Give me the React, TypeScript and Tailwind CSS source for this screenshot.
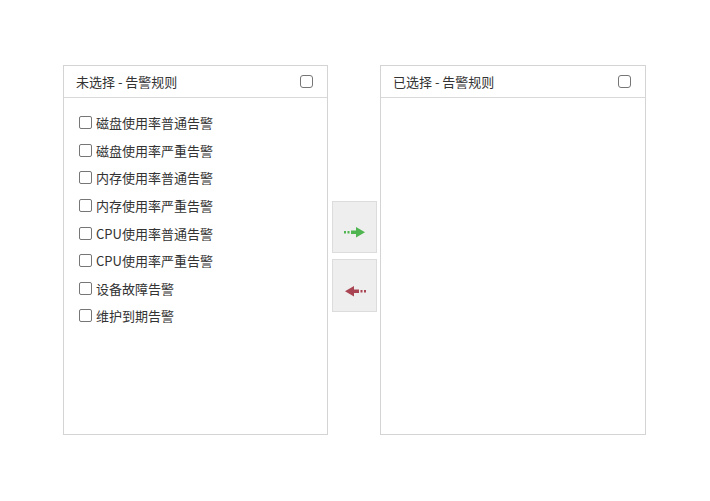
import React from "react";

const items = [
  "磁盘使用率普通告警",
  "磁盘使用率严重告警",
  "内存使用率普通告警",
  "内存使用率严重告警",
  "CPU使用率普通告警",
  "CPU使用率严重告警",
  "设备故障告警",
  "维护到期告警",
];

const font = { fontFamily: '"Noto Sans CJK SC", "Noto Sans", sans-serif' };

function Box({ header }: { header?: boolean }) {
  return (
    <span
      className={`inline-block w-[13px] h-[13px] border border-[#767676] bg-white shrink-0 ${header ? "rounded-[3px]" : "rounded-[2px]"}`}
    />
  );
}

function Panel({ title, list, w }: { title: string; list: string[]; w: string }) {
  return (
    <div className={`${w} h-[370px] border border-[#d4d4d4] bg-white flex flex-col`}>
      <div className="h-[32px] border-b border-[#d9d9d9] flex items-center justify-between pl-[12px] pr-[14px] text-[13px] text-[#333]">
        <span>{title}</span>
        <Box header />
      </div>
      <div className="flex flex-col pt-[11px] pl-[15px]">
        {list.map((t) => (
          <div key={t} className="h-[27.6px] flex items-center gap-[4px] text-[13px] text-[#333]">
            <Box />
            <span className="leading-none">{t}</span>
          </div>
        ))}
      </div>
    </div>
  );
}

export default function App() {
  return (
    <div className="w-[710px] h-[501px] bg-white flex pl-[63px] pt-[65px]" style={font}>
      <Panel title="未选择 - 告警规则" list={items} w="w-[265px]" />
      <div className="flex flex-col gap-[6px] pt-[136px] ml-[4px] mr-[3px]">
        <div className="w-[45px] h-[52px] pt-[10px] bg-[#eeeeee] border border-[#dcdcdc] flex items-center justify-center">
          <svg width="22" height="12" viewBox="0 0 22 12">
            <rect x="0" y="5" width="2" height="2.5" fill="#4fb550" />
            <rect x="3.5" y="5" width="2" height="2.5" fill="#4fb550" />
            <rect x="7" y="4.5" width="6" height="3.5" fill="#4fb550" />
            <path d="M12 1 L21 6.25 L12 11.5 Z" fill="#4fb550" />
          </svg>
        </div>
        <div className="w-[45px] h-[53px] pt-[10px] bg-[#eeeeee] border border-[#dcdcdc] flex items-center justify-center">
          <svg width="22" height="12" viewBox="0 0 22 12">
            <path d="M10 1 L1 6.25 L10 11.5 Z" fill="#a94453" />
            <rect x="9" y="4.5" width="6" height="3.5" fill="#a94453" />
            <rect x="16.5" y="5" width="2" height="2.5" fill="#a94453" />
            <rect x="20" y="5" width="2" height="2.5" fill="#a94453" />
          </svg>
        </div>
      </div>
      <Panel title="已选择 - 告警规则" list={[]} w="w-[266px]" />
    </div>
  );
}
